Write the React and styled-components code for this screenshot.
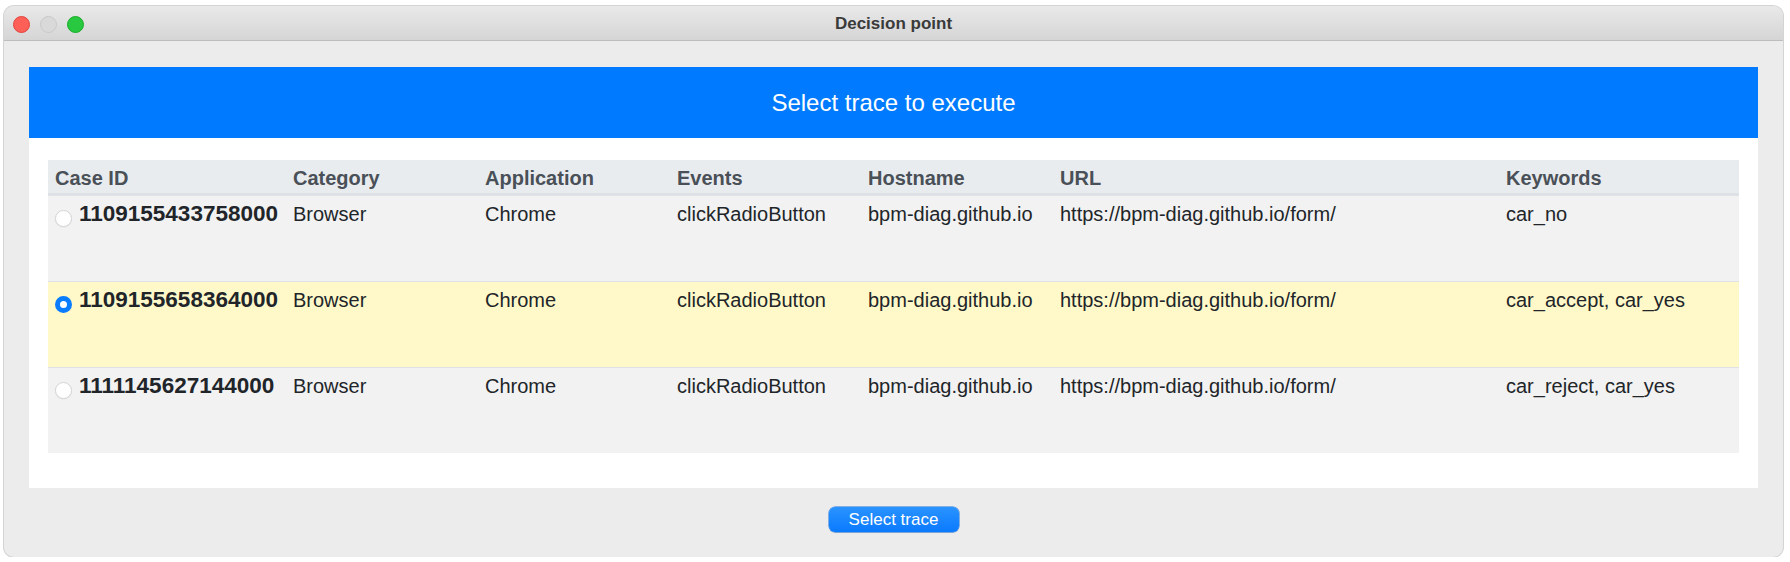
import React, { useState } from "react";
import styled, { createGlobalStyle } from "styled-components";

const GlobalStyle = createGlobalStyle`
  html, body {
    margin: 0;
    padding: 0;
    background: #ffffff;
    font-family: "Liberation Sans", Arial, sans-serif;
  }
`;

const traces = [
  { id: "1109155433758000", category: "Browser", app: "Chrome", events: "clickRadioButton", host: "bpm-diag.github.io", url: "https://bpm-diag.github.io/form/", keywords: "car_no" },
  { id: "1109155658364000", category: "Browser", app: "Chrome", events: "clickRadioButton", host: "bpm-diag.github.io", url: "https://bpm-diag.github.io/form/", keywords: "car_accept, car_yes" },
  { id: "1111145627144000", category: "Browser", app: "Chrome", events: "clickRadioButton", host: "bpm-diag.github.io", url: "https://bpm-diag.github.io/form/", keywords: "car_reject, car_yes" },
];

const headers = ["Case ID", "Category", "Application", "Events", "Hostname", "URL", "Keywords"];

const App = () => {
  const [selected, setSelected] = useState(1);
  return (
    <>
      <GlobalStyle />
      <Window>
        <TitleBar>
          <Lights>
            <Light color="#fe5f57" border="#e0443e" />
            <Light color="#d9d9d9" border="#c8c8c8" />
            <Light color="#28c840" border="#1aab29" />
          </Lights>
          <WindowTitle>Decision point</WindowTitle>
        </TitleBar>
        <Content>
          <Panel>
            <Banner>Select trace to execute</Banner>
            <PanelBody>
              <Table>
                <HeadRow>
                  {headers.map((h) => (
                    <HeadCell key={h}>{h}</HeadCell>
                  ))}
                </HeadRow>
                {traces.map((t, i) => (
                  <Row key={t.id} active={i === selected} onClick={() => setSelected(i)}>
                    <Cell>
                      <IdWrap>
                        <Radio checked={i === selected} />
                        <CaseId>{t.id}</CaseId>
                      </IdWrap>
                    </Cell>
                    <Cell>{t.category}</Cell>
                    <Cell>{t.app}</Cell>
                    <Cell>{t.events}</Cell>
                    <Cell>{t.host}</Cell>
                    <Cell>{t.url}</Cell>
                    <Cell>{t.keywords}</Cell>
                  </Row>
                ))}
              </Table>
            </PanelBody>
          </Panel>
          <Footer>
            <SelectBtn>Select trace</SelectBtn>
          </Footer>
        </Content>
      </Window>
    </>
  );
};

export default App;

const Window = styled.div`
  margin: 6px 7px 0 4px;
  width: 1779px;
  height: 551px;
  display: flex;
  flex-direction: column;
  background-color: #ececec;
  border-radius: 10px;
  overflow: hidden;
  box-shadow: 0 0 0 1px #d4d4d4;
`;
const TitleBar = styled.div`
  height: 35px;
  flex-shrink: 0;
  position: relative;
  display: flex;
  align-items: center;
  justify-content: center;
  padding-top: 1px;
  box-sizing: border-box;
  background: linear-gradient(#e9e9e9, #d5d5d5);
  border-bottom: 1px solid #bdbdbd;
`;
const Lights = styled.div`
  position: absolute;
  left: 9px;
  top: 10px;
  display: flex;
  gap: 10px;
`;
const Light = styled.div`
  width: 15px;
  height: 15px;
  border-radius: 50%;
  background-color: ${(p) => p.color};
  border: 0.5px solid ${(p) => p.border};
`;
const WindowTitle = styled.span`
  font-size: 17px;
  font-weight: 700;
  color: #3a3a3a;
`;
const Content = styled.div`
  flex: 1;
  display: flex;
  flex-direction: column;
  padding: 26px 25px 0 25px;
`;
const Panel = styled.div`
  display: flex;
  flex-direction: column;
  background-color: #ffffff;
`;
const Banner = styled.div`
  height: 71px;
  display: flex;
  align-items: center;
  justify-content: center;
  background-color: #007bff;
  color: white;
  font-size: 24px;
`;
const PanelBody = styled.div`
  padding: 22px 19px 35px 19px;
`;
const Table = styled.div`
  display: flex;
  flex-direction: column;
  color: #212529;
`;
const cols = "238px 192px 192px 191px 192px 446px 240px";
const HeadRow = styled.div`
  display: grid;
  grid-template-columns: ${cols};
  height: 33px;
  background-color: #e9ecef;
  border-bottom: 2px solid #dee2e6;
`;
const HeadCell = styled.div`
  display: flex;
  align-items: center;
  padding: 3px 7px 0 7px;
  font-size: 20px;
  font-weight: 700;
  color: #495057;
`;
const Row = styled.div`
  display: grid;
  grid-template-columns: ${cols};
  height: 85px;
  background-color: ${(p) => (p.active ? "#fff9c9" : "#f2f2f2")};
  border-top: 1px solid #dee2e6;
  &:first-of-type {
    border-top: none;
  }
  cursor: pointer;
`;
const Cell = styled.div`
  padding: 3px 7px 0 7px;
  font-size: 20px;
  line-height: 30px;
  white-space: nowrap;
`;
const IdWrap = styled.div`
  display: flex;
  align-items: flex-start;
  gap: 7px;
`;
const Radio = styled.span`
  width: 17px;
  height: 17px;
  margin-top: 11px;
  box-sizing: border-box;
  border-radius: 50%;
  flex-shrink: 0;
  background-color: #ffffff;
  border: ${(p) => (p.checked ? "5.5px solid #0a7cff" : "1px solid #d6d6d6")};
  box-shadow: ${(p) => (p.checked ? "none" : "0 0.5px 1px rgba(0,0,0,0.08)")};
`;
const CaseId = styled.span`
  font-size: 22.5px;
  font-weight: 700;
`;
const Footer = styled.div`
  display: flex;
  justify-content: center;
  padding-top: 19px;
`;
const SelectBtn = styled.button`
  width: 130px;
  height: 25px;
  border: none;
  border-radius: 6px;
  background: linear-gradient(#2a93ff, #0a7aff);
  box-shadow: 0 0 0 0.5px #1a72d8, 0 1px 1px rgba(0,0,0,0.1);
  color: white;
  font-family: "Liberation Sans", Arial, sans-serif;
  font-size: 17px;
  padding: 0;
  cursor: pointer;
`;
